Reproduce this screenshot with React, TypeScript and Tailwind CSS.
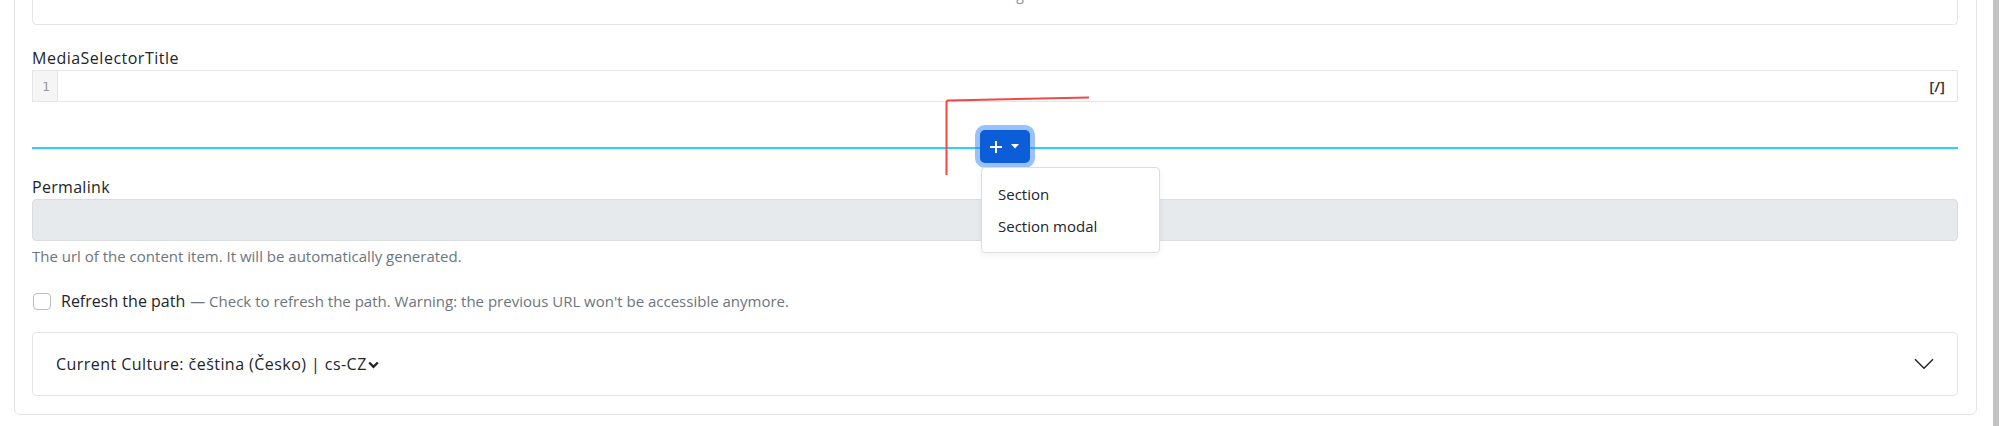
import React from "react";

export default function App() {
  return (
    <div className="relative flex h-[426px] w-[1999px] overflow-hidden bg-white font-['Open_Sans',sans-serif] text-[#212529]">
      <div className="flex-1">
        {/* outer card */}
        <div className="-mt-[40px] ml-[14px] mr-[16px] rounded-md border border-[#e3e5e8] bg-white pb-[18px] pl-[17px] pr-[18px] pt-[10px]">
          {/* top card (cut) */}
          <div className="flex h-[54px] items-end justify-center rounded border border-[#e3e5e8] pb-[19px]">
            <span className="pl-[6px] text-[14px] leading-[21px] text-[#8a9096]">Loading</span>
          </div>

          {/* MediaSelectorTitle */}
          <div className="mt-[21px] text-[16px] leading-[24px] tracking-[0.5px]">MediaSelectorTitle</div>
          <div className="flex h-[32px] items-stretch border border-[#e6e6e6]">
            <div className="flex w-[25px] items-center justify-center border-r border-[#e6e6e6] bg-[#f5f5f5] pl-[2px] pt-[2px] font-['DejaVu_Sans_Mono',monospace] text-[13px] text-[#9a9a9a]">
              1
            </div>
            <div className="flex-1" />
            <div className="flex items-center pr-[12px] text-[15px] font-semibold text-[#333]">[/]</div>
          </div>

          {/* divider with add button */}
          <div className="mt-[28px] grid">
            <div className="col-start-1 row-start-1 mt-[17px] h-[2px] self-start bg-[#2fd0f0]" />
            <div className="relative col-start-1 row-start-1 ml-[20px] justify-self-center">
              <button className="flex h-[33px] w-[50px] items-center justify-center gap-[8px] rounded-[5px] bg-[#0b5ed7] pr-[2px] shadow-[0_0_0_5px_rgba(49,132,253,0.5)]">
                <svg width="14" height="14" viewBox="0 0 14 14">
                  <path d="M7 1v12M1 7h12" stroke="white" strokeWidth="2" />
                </svg>
                <svg width="8" height="5" viewBox="0 0 8 5">
                  <path d="M0 0h8L4 4.5z" fill="white" />
                </svg>
              </button>
              <div className="absolute left-[1px] top-full z-10 mt-[4px] w-[179px] rounded border border-[#dcdee1] bg-white py-[10px] text-[15px] text-[#212529] shadow-[0_2px_6px_rgba(0,0,0,0.06)]">
                <div className="flex h-[32px] items-center pl-[16px]">Section</div>
                <div className="flex h-[32px] items-center pl-[16px]">Section modal</div>
              </div>
            </div>
          </div>

          {/* Permalink */}
          <div className="mt-[12px] text-[16px] leading-[24px] tracking-[0.3px]">Permalink</div>
          <div className="h-[42px] rounded border border-[#dadde0] bg-[#e7eaed]" />
          <div className="mt-[5px] text-[15px] leading-[21px] text-[#6c757d]">
            The url of the content item. It will be automatically generated.
          </div>

          {/* Refresh checkbox */}
          <div className="mt-[22px] flex h-[24px] items-center">
            <div className="ml-[1px] h-[17px] w-[18px] rounded-[4px] border border-[#b9bdc2] bg-white" />
            <span className="ml-[10px] text-[16px] leading-[24px]">Refresh the path</span>
            <span className="ml-[5px] text-[15px] text-[#6c757d]">
              — Check to refresh the path. Warning: the previous URL won't be accessible anymore.
            </span>
          </div>

          {/* Culture accordion */}
          <div className="mt-[19px] flex h-[64px] items-center justify-between rounded border border-[#e3e5e8] pl-[23px] pr-[23px]">
            <div className="flex items-center text-[16px] tracking-[0.45px]">
              <span>Current Culture: čeština (Česko) | cs-CZ</span>
              <svg width="11" height="8" viewBox="0 0 11 8" className="ml-[1px] mt-[1px]">
                <path d="M1.2 1.5l4.3 4.3 4.3-4.3" stroke="#212529" strokeWidth="2.4" fill="none" />
              </svg>
            </div>
            <svg width="20" height="12" viewBox="0 0 20 12">
              <path d="M1 1.2l9 9 9-9" stroke="#212529" strokeWidth="1.5" fill="none" />
            </svg>
          </div>
        </div>
      </div>
      {/* scrollbar */}
      <div className="w-[6px] bg-[#c2c2c2]" />

      {/* red annotation */}
      <svg className="pointer-events-none absolute left-0 top-0" width="1999" height="426">
        <path d="M1089 97.5 L948 100.5 Q946.5 100.5 946.5 102 L946.5 175" stroke="#ef4848" strokeWidth="2" fill="none" />
      </svg>
    </div>
  );
}
